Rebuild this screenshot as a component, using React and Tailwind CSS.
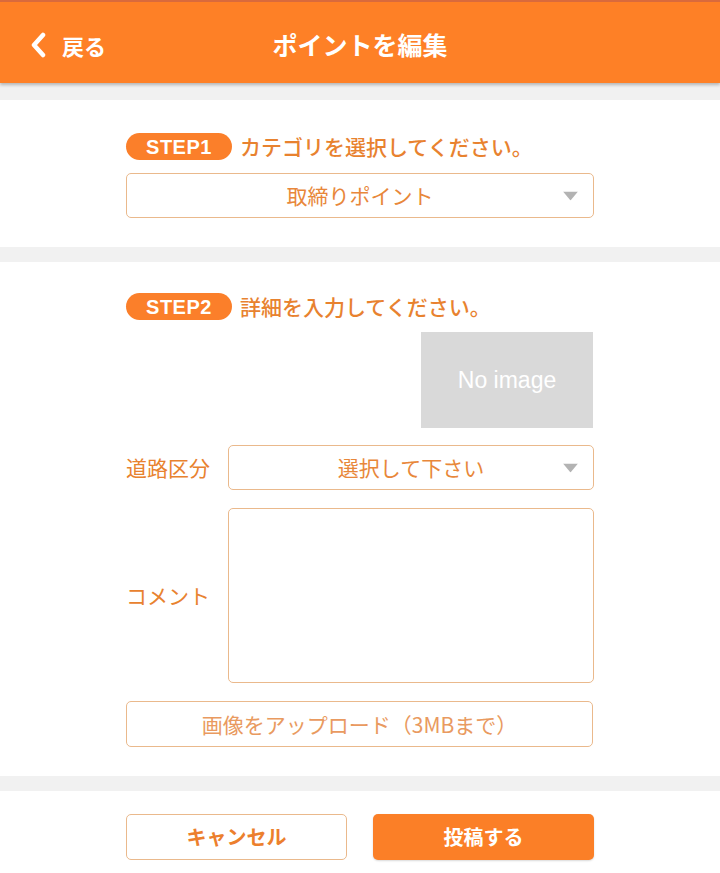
import React from 'react';

const jp = { fontFamily: '"Noto Sans CJK JP", "Noto Sans", sans-serif' };

const Caret = () => (
    <svg width="15" height="9" viewBox="0 0 15 9" className="absolute right-[15px] top-1/2 -translate-y-1/2">
        <path d="M0 0 H15 L7.5 9 Z" fill="#b3b3b3" />
    </svg>
);

const Select = ({ label, className = '' }) => (
    <div className={`relative flex items-center justify-center border border-[#eab98c] rounded-[5px] bg-white ${className}`}>
        <span className="text-[21px] leading-none text-[#e8873a]">{label}</span>
        <Caret />
    </div>
);

const StepTitle = ({ step, text }) => (
    <div className="flex items-center gap-2 h-[27px]">
        <span className="h-[27px] w-[106px] rounded-full bg-[#fb7f2a] flex items-center justify-center text-white text-[20px] leading-none font-bold tracking-wide" style={{ fontFamily: '"Liberation Sans", Arial, sans-serif' }}>
            {step}
        </span>
        <span className="text-[21px] leading-none text-[#e8822f] font-medium">{text}</span>
    </div>
);

const Band = ({ h }) => <div className={`bg-[#f1f1f1] ${h}`} />;

export default function App() {
    return (
        <div className="w-[720px] min-h-[873px] bg-white" style={jp}>
            {/* Header */}
            <header className="relative z-10 h-[83px] pt-[4px] bg-[#fe8026] border-t-2 border-[#d96a3c] shadow-[0_2px_3px_rgba(0,0,0,0.25)] flex items-center">
                <div className="flex items-center pl-[29px] w-[160px]">
                    <svg width="18" height="26" viewBox="0 0 18 26" className="mr-[15px]">
                        <path d="M14 3 L5 13 L14 23" stroke="white" strokeWidth="4.5" fill="none" strokeLinecap="round" strokeLinejoin="round" />
                    </svg>
                    <span className="text-white text-[22px] leading-none font-bold">戻る</span>
                </div>
                <h1 className="absolute left-0 right-0 text-center text-white text-[25px] leading-none font-bold pointer-events-none">
                    ポイントを編集
                </h1>
            </header>

            <Band h="h-[17px]" />

            {/* Step 1 */}
            <section className="w-[468px] mx-auto pt-[33px] pb-[29px]">
                <StepTitle step="STEP1" text="カテゴリを選択してください。" />
                <Select label="取締りポイント" className="mt-[13px] h-[45px]" />
            </section>

            <Band h="h-[15px]" />

            {/* Step 2 */}
            <section className="w-[468px] mx-auto pt-[31px] pb-[29px]">
                <StepTitle step="STEP2" text="詳細を入力してください。" />
                <div className="flex justify-end mt-[12px] pr-[1px]">
                    <div className="w-[172px] h-[96px] bg-[#d9d9d9] flex items-center justify-center text-white text-[23px] leading-none" style={{ fontFamily: '"Liberation Sans", Arial, sans-serif' }}>
                        No image
                    </div>
                </div>
                <div className="flex items-center mt-[17px]">
                    <span className="w-[102px] text-[21px] leading-none text-[#e8822f]">道路区分</span>
                    <Select label="選択して下さい" className="flex-1 h-[45px]" />
                </div>
                <div className="flex items-center mt-[18px]">
                    <span className="w-[102px] text-[21px] leading-none text-[#e8822f]">コメント</span>
                    <textarea className="flex-1 h-[175px] border border-[#eab98c] rounded-[5px] resize-none outline-none block" />
                </div>
                <button className="block mt-[18px] w-[467px] h-[46px] border border-[#eab98c] rounded-[5px] bg-white text-[21px] leading-none text-[#e99a60]">
                    画像をアップロード（3MBまで）
                </button>
            </section>

            <Band h="h-[15px]" />

            {/* Footer */}
            <footer className="w-[468px] mx-auto pt-[23px] pb-[14px] flex justify-between">
                <button className="w-[221px] h-[46px] border border-[#eab98c] rounded-[5px] bg-white text-[20px] leading-none font-bold text-[#ec7f2d]">
                    キャンセル
                </button>
                <button className="w-[221px] h-[46px] rounded-[5px] bg-[#fb7f27] text-[20px] leading-none font-bold text-white shadow-[0_1px_2px_rgba(0,0,0,0.15)]">
                    投稿する
                </button>
            </footer>
        </div>
    );
}
